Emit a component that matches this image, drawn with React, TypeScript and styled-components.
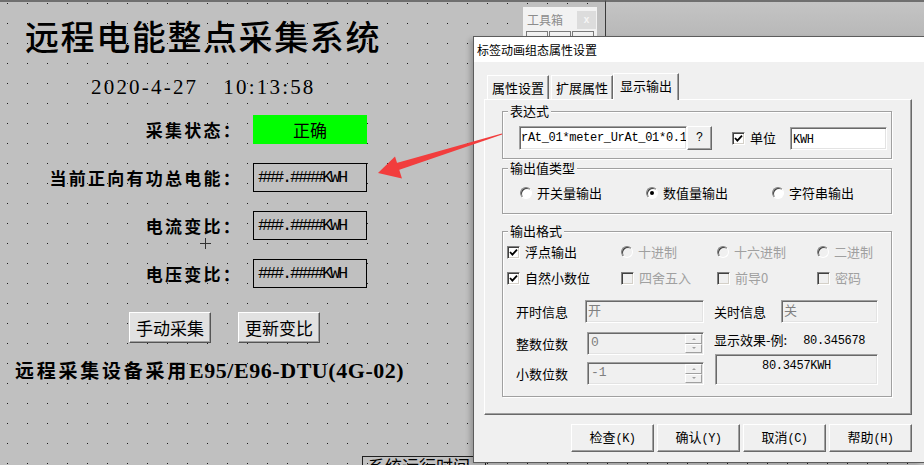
import React from "react";
import styled, { createGlobalStyle } from "styled-components";

const CJK = `"Noto Sans CJK SC", "Noto Sans", sans-serif`;
const SERIF = `"Liberation Serif", "Noto Sans CJK SC", serif`;
const MONO = `"Liberation Mono", "Noto Sans CJK SC", monospace`;

const GlobalStyle = createGlobalStyle`
  html, body { margin: 0; padding: 0; background: #c0c0c0; }
  body { overflow: hidden; }
  * { box-sizing: border-box; }
`;

const Screen = styled.div`
  position: relative;
  width: 924px;
  height: 465px;
  overflow: hidden;
  background-color: #c0c0c0;
  background-image: conic-gradient(at 1px 1px, transparent 75%, #1e1e1e 0);
  background-size: 20px 20px;
  background-position: 7px 3px;
  box-shadow: inset 0 2px 0 #6f6f6f;
  font-family: ${CJK};
  color: #000;
`;

/* ---------- HMI canvas ---------- */
const Canvas = styled.div`
  display: flex;
  flex-direction: column;
  align-items: flex-start;
  padding-top: 16px;
`;

const Title = styled.h1`
  margin: 0 0 0 25px;
  font: 500 34px/40px ${CJK};
  letter-spacing: 1.6px;
  white-space: nowrap;
`;

const Clock = styled.div`
  margin: 19px 0 0 91px;
  display: flex;
  gap: 25px;
  font: 400 21px/24px ${SERIF};
  letter-spacing: 2.2px;
  white-space: nowrap;
`;

const Form = styled.div`
  margin-top: 16px;
  display: grid;
  grid-template-columns: 242px 114px;
  grid-auto-rows: 29px;
  column-gap: 11px;
  row-gap: 19px;
  align-items: center;
`;

const FieldLabel = styled.div`
  justify-self: end;
  font: 700 17px/20px ${CJK};
  letter-spacing: 2.25px;
  white-space: nowrap;
`;

const StatusBox = styled.div`
  height: 29px;
  background: #00ff00;
  display: flex;
  align-items: center;
  justify-content: center;
  font: 400 17px/20px ${CJK};
`;

const ValueBox = styled.div`
  height: 29px;
  border: 1px solid #000;
  background: #c0c0c0;
  display: flex;
  align-items: center;
  padding-left: 4px;
  font: 400 17px/20px ${MONO};
  letter-spacing: -2.2px;
  white-space: nowrap;
`;

const ActionRow = styled.div`
  margin: 24px 0 0 129px;
  display: flex;
  gap: 27px;
`;

const CanvasButton = styled.button`
  width: 82px;
  height: 31px;
  padding: 0;
  background: #e1e1e1;
  border: 1px solid;
  border-color: #ffffff #555555 #555555 #ffffff;
  box-shadow: inset -1px -1px 0 #a0a0a0;
  font: 400 17px/20px ${CJK};
  color: #000;
`;

const Footer = styled.div`
  margin: 15px 0 0 15px;
  white-space: nowrap;
  line-height: 24px;
`;

const FooterCJK = styled.span`
  font: 700 19px/24px ${CJK};
  letter-spacing: 2.75px;
`;

const FooterLatin = styled.span`
  font: 700 22px/24px ${SERIF};
  letter-spacing: 0.55px;
`;

const RuntimeBox = styled.div`
  margin: 73px 0 0 362px;
  width: 124px;
  height: 30px;
  border: 1px solid #202020;
  padding: 0 5px;
  font: 400 17px/17px ${CJK};
  white-space: nowrap;
  overflow: hidden;
`;

const CursorMark = styled.svg`
  position: absolute;
  left: 200px;
  top: 238px;
`;

/* ---------- background windows ---------- */
const SideWindow = styled.div`
  position: absolute;
  left: 605px;
  top: 0;
  width: 319px;
  height: 37px;
  border-left: 1px solid #3a3a3a;
  border-top: 2px solid #6f6f6f;
  border-bottom: 1px solid #4a4a4a;
  background: linear-gradient(#c4c4c4, #b8b8b8);
`;

const ToolBox = styled.div`
  position: absolute;
  left: 523px;
  top: 7px;
  width: 74px;
  height: 30px;
  background: #f2f2f2;
  display: flex;
  flex-direction: column;
`;

const ToolBoxHead = styled.div`
  display: flex;
  align-items: center;
  justify-content: space-between;
  height: 21px;
  margin-top: 3px;
  padding: 0 1px 0 4px;
`;

const ToolBoxTitle = styled.span`
  font: 400 12px/14px ${CJK};
  color: #8c8c8c;
`;

const ToolBoxClose = styled.span`
  width: 19px;
  height: 18px;
  background: #dcdcdc;
  color: #f6f6f6;
  font: 700 10px/18px "Liberation Sans", sans-serif;
  text-align: center;
`;

const ToolStrip = styled.div`
  display: flex;
  gap: 1px;
  margin-top: 2px;
  padding-left: 3px;
`;

const ToolSlot = styled.span`
  width: 22px;
  height: 6px;
  border: 1px solid #7a7a7a;
  border-bottom: none;
`;

/* ---------- dialog ---------- */
const Dialog = styled.div`
  position: absolute;
  left: 473px;
  top: 36px;
  width: 451px;
  height: 427px;
  background: #f0f0f0;
  border: 1px solid #5c5c5c;
  border-right: none;
  box-shadow: -4px 2px 5px -1px rgba(0, 0, 0, 0.22);
  display: flex;
  flex-direction: column;
  font: 400 13px/16px ${CJK};
  color: #000;
`;

const TitleBar = styled.div`
  height: 25px;
  background: #ffffff;
  display: flex;
  align-items: center;
  padding-left: 3px;
  font-size: 12px;
  white-space: nowrap;
`;

const DialogBody = styled.div`
  display: flex;
  flex-direction: column;
  padding: 11px 12px 0 10px;
`;

const TabStrip = styled.div`
  display: flex;
  align-items: flex-end;
  height: 26px;
  padding-left: 3px;
`;

const Tab = styled.div<{ $active?: boolean }>`
  position: relative;
  z-index: ${(p) => (p.$active ? 1 : 0)};
  width: ${(p) => (p.$active ? 66 : 62)}px;
  height: ${(p) => (p.$active ? 27 : 24)}px;
  margin-bottom: ${(p) => (p.$active ? -1 : 0)}px;
  padding-bottom: ${(p) => (p.$active ? 3 : 0)}px;
  background: #f0f0f0;
  border: 1px solid;
  border-bottom: none;
  border-color: #ffffff #696969 transparent #ffffff;
  box-shadow: inset -1px 0 0 #a0a0a0;
  display: flex;
  align-items: center;
  justify-content: center;
  font-size: 13px;
  white-space: nowrap;
  &:first-child {
    margin-right: 2px;
  }
`;

const TabPanel = styled.div`
  height: 316px;
  border: 1px solid;
  border-color: #ffffff #696969 #696969 #ffffff;
  box-shadow: inset -1px -1px 0 #a0a0a0;
  padding: 11px 19px 0 17px;
  display: flex;
  flex-direction: column;
`;

const Group = styled.div<{ $pad: string; $top: number }>`
  position: relative;
  margin-top: ${(p) => p.$top}px;
  border: 1px solid #a0a0a0;
  box-shadow: inset 1px 1px 0 #ffffff, 1px 1px 0 #ffffff;
  padding: ${(p) => p.$pad};
`;

const Legend = styled.span`
  position: absolute;
  left: 5px;
  top: -9px;
  padding: 0 2px;
  background: #f0f0f0;
  font-size: 13px;
  line-height: 16px;
  white-space: nowrap;
`;

const Row = styled.div`
  display: flex;
  align-items: center;
`;

const Sunken = styled.div<{ $w: number; $h: number; $bg?: string; $indent?: number }>`
  width: ${(p) => p.$w}px;
  height: ${(p) => p.$h}px;
  margin-left: ${(p) => p.$indent ?? 0}px;
  flex: none;
  background: ${(p) => p.$bg ?? "#ffffff"};
  border: 1px solid;
  border-color: #a0a0a0 #ffffff #ffffff #a0a0a0;
  box-shadow: inset 1px 1px 0 #696969, inset -1px -1px 0 #e3e3e3;
  overflow: hidden;
  white-space: nowrap;
`;

const MonoText = styled.span<{ $color?: string }>`
  font: 400 12px/16px ${MONO};
  letter-spacing: -0.3px;
  color: ${(p) => p.$color ?? "#000"};
`;

const ExprInput = styled(Sunken)`
  display: flex;
  align-items: center;
  padding-left: 1px;
`;

const HelpButton = styled.div`
  width: 25px;
  height: 24px;
  flex: none;
  background: #f0f0f0;
  border: 1px solid;
  border-color: #ffffff #696969 #696969 #ffffff;
  box-shadow: inset -1px -1px 0 #a0a0a0;
  display: flex;
  align-items: center;
  justify-content: center;
  font: 400 12px/1 ${MONO};
`;

const TextInput = styled(Sunken)`
  padding: 2px 0 0 2px;
`;

const Option = styled.div<{ $w?: number; $disabled?: boolean; $indent?: number }>`
  display: flex;
  align-items: center;
  gap: 5px;
  width: ${(p) => (p.$w ? `${p.$w}px` : "auto")};
  margin-left: ${(p) => p.$indent ?? 0}px;
  flex: none;
  color: ${(p) => (p.$disabled ? "#a0a0a0" : "#000")};
  white-space: nowrap;
  font-size: 13px;
  line-height: 16px;
`;

const CheckBox = styled.span<{ $disabled?: boolean }>`
  width: 13px;
  height: 13px;
  flex: none;
  background: ${(p) => (p.$disabled ? "#f0f0f0" : "#ffffff")};
  border: 1px solid;
  border-color: #808080 #ffffff #ffffff #808080;
  box-shadow: inset 1px 1px 0 #404040, inset -1px -1px 0 #d4d0c8;
  display: flex;
  align-items: center;
  justify-content: center;
`;

const Radio = styled.span<{ $checked?: boolean; $disabled?: boolean }>`
  width: 12px;
  height: 12px;
  flex: none;
  border-radius: 50%;
  background: ${(p) => (p.$disabled ? "#f0f0f0" : "#ffffff")};
  border: 1px solid;
  border-color: #808080 #ffffff #ffffff #808080;
  box-shadow: inset 1px 1px 0 #404040;
  display: flex;
  align-items: center;
  justify-content: center;
  &::after {
    content: "";
    display: ${(p) => (p.$checked ? "block" : "none")};
    width: 4px;
    height: 4px;
    border-radius: 50%;
    background: #000;
  }
`;

const OptionGrid = styled.div`
  display: grid;
  grid-template-columns: 114px 96px 100px 1fr;
  grid-auto-rows: 20px;
  row-gap: 6px;
  align-items: center;
`;

const InfoArea = styled.div`
  margin: 12px 0 0 9px;
  display: grid;
  grid-template-columns: 188px 164px;
  column-gap: 10px;
  row-gap: 9px;
`;

const InfoField = styled.div`
  display: flex;
  align-items: center;
`;

const InfoLabel = styled.span<{ $w: number }>`
  width: ${(p) => p.$w}px;
  flex: none;
  white-space: nowrap;
`;

const Stack = styled.div<{ $gap: number }>`
  display: flex;
  flex-direction: column;
  gap: ${(p) => p.$gap}px;
`;

const DisabledInput = styled(Sunken)`
  padding: 1px 0 0 2px;
  color: #808080;
  font-size: 13px;
  line-height: 16px;
`;

const SpinBox = styled(Sunken)`
  display: flex;
  align-items: stretch;
  padding: 1px;
`;

const SpinText = styled.span`
  flex: 1;
  padding: 1px 0 0 2px;
  color: #808080;
  font: 400 13px/16px ${MONO};
`;

const SpinButtons = styled.div`
  width: 17px;
  display: flex;
  flex-direction: column;
`;

const SpinButton = styled.div<{ $up?: boolean }>`
  flex: 1;
  background: #f0f0f0;
  border: 1px solid;
  border-color: #ffffff #a0a0a0 #a0a0a0 #ffffff;
  display: flex;
  align-items: center;
  justify-content: center;
  &::after {
    content: "";
    width: 0;
    height: 0;
    border-left: 2px solid transparent;
    border-right: 2px solid transparent;
    ${(p) =>
      p.$up ? "border-bottom: 2px solid #a0a0a0;" : "border-top: 2px solid #a0a0a0;"}
  }
`;

const Caption = styled.div`
  height: 22px;
  display: flex;
  align-items: flex-start;
  gap: 16px;
  line-height: 13px;
  padding-top: 1px;
  white-space: nowrap;
`;

const Preview = styled(Sunken)`
  text-align: center;
  padding-top: 1px;
`;

const DialogButtons = styled.div`
  margin-top: 9px;
  display: flex;
  justify-content: flex-end;
  gap: 3px;
`;

const DlgButton = styled.button`
  width: 83px;
  height: 28px;
  padding: 0;
  background: #f0f0f0;
  border: 1px solid;
  border-color: #ffffff #696969 #696969 #ffffff;
  box-shadow: inset -1px -1px 0 #a0a0a0;
  font: 400 13px/16px ${CJK};
  color: #000;
  white-space: nowrap;
`;

const Key = styled.span`
  font: 400 12px/16px ${MONO};
  letter-spacing: -0.6px;
`;

const ArrowOverlay = styled.svg`
  position: absolute;
  left: 0;
  top: 0;
  pointer-events: none;
`;

const Check = () => (
  <svg width="9" height="9" viewBox="0 0 9 9">
    <polyline points="1,4 3.4,6.6 8,1.6" fill="none" stroke="#000" strokeWidth="1.8" />
  </svg>
);

export default function App() {
  return (
    <>
      <GlobalStyle />
      <Screen>
        <Canvas>
          <Title>远程电能整点采集系统</Title>
          <Clock>
            <span>2020-4-27</span>
            <span>10:13:58</span>
          </Clock>
          <Form>
            <FieldLabel>采集状态：</FieldLabel>
            <StatusBox>正确</StatusBox>
            <FieldLabel>当前正向有功总电能：</FieldLabel>
            <ValueBox>###.####KWH</ValueBox>
            <FieldLabel>电流变比：</FieldLabel>
            <ValueBox>###.####KWH</ValueBox>
            <FieldLabel>电压变比：</FieldLabel>
            <ValueBox>###.####KWH</ValueBox>
          </Form>
          <ActionRow>
            <CanvasButton>手动采集</CanvasButton>
            <CanvasButton>更新变比</CanvasButton>
          </ActionRow>
          <Footer>
            <FooterCJK>远程采集设备采用</FooterCJK>
            <FooterLatin>E95/E96-DTU(4G-02)</FooterLatin>
          </Footer>
          <RuntimeBox>系统运行时间</RuntimeBox>
        </Canvas>

        <CursorMark width="11" height="11" viewBox="0 0 11 11">
          <path d="M0 5.5H11M5.5 0V11" stroke="#333" strokeWidth="1" />
        </CursorMark>

        <SideWindow />
        <ToolBox>
          <ToolBoxHead>
            <ToolBoxTitle>工具箱</ToolBoxTitle>
            <ToolBoxClose>x</ToolBoxClose>
          </ToolBoxHead>
          <ToolStrip>
            <ToolSlot />
            <ToolSlot />
            <ToolSlot />
          </ToolStrip>
        </ToolBox>

        <Dialog>
          <TitleBar>标签动画组态属性设置</TitleBar>
          <DialogBody>
            <TabStrip>
              <Tab>属性设置</Tab>
              <Tab>扩展属性</Tab>
              <Tab $active>显示输出</Tab>
            </TabStrip>
            <TabPanel>
              <Group $top={0} $pad="14px 0 8px 16px">
                <Legend>表达式</Legend>
                <Row>
                  <ExprInput $w={168} $h={24}>
                    <MonoText>rAt_01*meter_UrAt_01*0.1</MonoText>
                  </ExprInput>
                  <HelpButton>?</HelpButton>
                  <Option $indent={20}>
                    <CheckBox>
                      <Check />
                    </CheckBox>
                    单位
                  </Option>
                  <TextInput $w={97} $h={23} $indent={14}>
                    <MonoText>KWH</MonoText>
                  </TextInput>
                </Row>
              </Group>

              <Group $top={9} $pad="16px 0 12px 17px">
                <Legend>输出值类型</Legend>
                <Row>
                  <Option $w={126}>
                    <Radio />
                    开关量输出
                  </Option>
                  <Option $w={126}>
                    <Radio $checked />
                    数值量输出
                  </Option>
                  <Option $w={120}>
                    <Radio />
                    字符串输出
                  </Option>
                </Row>
              </Group>

              <Group $top={17} $pad="10px 0 11px 4px">
                <Legend>输出格式</Legend>
                <OptionGrid>
                  <Option>
                    <CheckBox>
                      <Check />
                    </CheckBox>
                    浮点输出
                  </Option>
                  <Option $disabled>
                    <Radio $disabled />
                    十进制
                  </Option>
                  <Option $disabled>
                    <Radio $disabled />
                    十六进制
                  </Option>
                  <Option $disabled>
                    <Radio $disabled />
                    二进制
                  </Option>
                  <Option>
                    <CheckBox>
                      <Check />
                    </CheckBox>
                    自然小数位
                  </Option>
                  <Option $disabled>
                    <CheckBox $disabled />
                    四舍五入
                  </Option>
                  <Option $disabled>
                    <CheckBox $disabled />
                    前导0
                  </Option>
                  <Option $disabled>
                    <CheckBox $disabled />
                    密码
                  </Option>
                </OptionGrid>

                <InfoArea>
                  <InfoField>
                    <InfoLabel $w={69}>开时信息</InfoLabel>
                    <DisabledInput $w={119} $h={23} $bg="#f0f0f0">
                      开
                    </DisabledInput>
                  </InfoField>
                  <InfoField>
                    <InfoLabel $w={67}>关时信息</InfoLabel>
                    <DisabledInput $w={97} $h={23} $bg="#f0f0f0">
                      关
                    </DisabledInput>
                  </InfoField>

                  <Stack $gap={7}>
                    <InfoField>
                      <InfoLabel $w={69}>整数位数</InfoLabel>
                      <SpinBox $w={117} $h={23} $bg="#f0f0f0" $indent={2}>
                        <SpinText>0</SpinText>
                        <SpinButtons>
                          <SpinButton $up />
                          <SpinButton />
                        </SpinButtons>
                      </SpinBox>
                    </InfoField>
                    <InfoField>
                      <InfoLabel $w={69}>小数位数</InfoLabel>
                      <SpinBox $w={117} $h={23} $bg="#f0f0f0" $indent={2}>
                        <SpinText>-1</SpinText>
                        <SpinButtons>
                          <SpinButton $up />
                          <SpinButton />
                        </SpinButtons>
                      </SpinBox>
                    </InfoField>
                  </Stack>
                  <Stack $gap={0}>
                    <Caption>
                      <span>显示效果-例:</span>
                      <MonoText>80.345678</MonoText>
                    </Caption>
                    <Preview $w={163} $h={31} $bg="#f0f0f0" $indent={1}>
                      <MonoText>80.3457KWH</MonoText>
                    </Preview>
                  </Stack>
                </InfoArea>
              </Group>
            </TabPanel>
            <DialogButtons>
              <DlgButton>
                检查<Key>(K)</Key>
              </DlgButton>
              <DlgButton>
                确认<Key>(Y)</Key>
              </DlgButton>
              <DlgButton>
                取消<Key>(C)</Key>
              </DlgButton>
              <DlgButton>
                帮助<Key>(H)</Key>
              </DlgButton>
            </DialogButtons>
          </DialogBody>
        </Dialog>

        <ArrowOverlay width="924" height="465" viewBox="0 0 924 465">
          <polygon
            points="502.2,134.5 501.8,133.5 394.8,163.4 397.2,170.6"
            fill="#f23d3d"
          />
          <polygon points="378,173 395,156.5 402,178.5" fill="#f23d3d" />
        </ArrowOverlay>
      </Screen>
    </>
  );
}
